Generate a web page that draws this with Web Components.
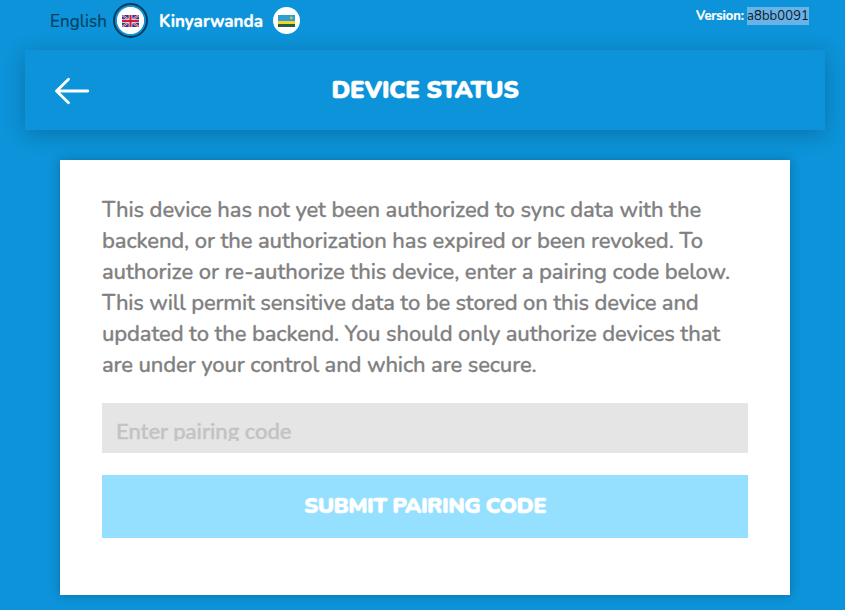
<!DOCTYPE html>
<html lang="en">
<head>
<meta charset="utf-8">
<title>Device status</title>
<style>
  html, body { margin: 0; height: 100%; overflow: hidden; background: #0c93d9; }
  body { font-family: Nunito, Lato, "Open Sans", sans-serif; color: #fff; }
</style>
</head>
<body>
<device-app></device-app>
<script>
const define = (name, html, ready) => customElements.define(name, class extends HTMLElement {
  connectedCallback() {
    if (this.shadowRoot) return;
    const t = document.createElement('template');
    t.innerHTML = html;
    this.attachShadow({ mode: 'open' }).append(t.content.cloneNode(true));
    if (ready) ready(this);
  }
});

/* One line of text, tracked so that it spans the given measure. */
define('text-line', `
  <style>:host{display:block;white-space:nowrap} span{display:inline-block}</style>
  <span></span>`, el => {
  const s = el.shadowRoot.querySelector('span');
  s.textContent = el.getAttribute('text');
  const target = +el.getAttribute('measure');
  const gap = (target - s.getBoundingClientRect().width) / s.textContent.length;
  s.style.letterSpacing = gap.toFixed(3) + 'px';
});

define('flag-badge', `
  <style>
    :host{display:grid;place-items:center;box-sizing:border-box;width:27px;height:27px;border-radius:50%;background:#fff}
    :host([selected]){width:35px;height:35px;border:2px solid #063c59;background:radial-gradient(circle,#fff 13.2px,#0c93d9 14px)}
  </style><slot></slot>`);

define('language-bar', `
  <style>
    :host{display:flex;align-items:center;height:41px;font-size:17px;line-height:22px}
    .en{color:#07405f;margin:2px 6px 0 0;-webkit-text-stroke:.2px}
    .rw{font-weight:700;margin:2px 10px 0 11px;-webkit-text-stroke:.3px}
    svg{display:block}
  </style>
  <text-line class="en" text="English" measure="57"></text-line>
  <flag-badge selected>
    <svg width="17" height="12" viewBox="0 0 17 12">
      <rect width="17" height="12" fill="#293f91"/>
      <path d="M0 0L17 12M17 0L0 12" stroke="#d9cfe0" stroke-width="2"/>
      <path d="M0 0L17 12M17 0L0 12" stroke="#d2384f" stroke-width="1"/>
      <path d="M8.5 0V12M0 6H17" stroke="#f4eef4" stroke-width="3.6"/>
      <path d="M8.5 0V12M0 6H17" stroke="#d01e3a" stroke-width="2.1"/>
    </svg>
  </flag-badge>
  <text-line class="rw" text="Kinyarwanda" measure="104"></text-line>
  <flag-badge>
    <svg width="17" height="12" viewBox="0 0 17 12">
      <rect width="17" height="6" fill="#2d9fd4"/><rect y="6" width="17" height="3" fill="#f5d32c"/>
      <rect y="9" width="17" height="3" fill="#22603f"/><circle cx="13.3" cy="2.9" r="1.4" fill="#c8c450"/>
    </svg>
  </flag-badge>`);

define('version-label', `
  <style>
    :host{display:flex;font-size:13px;line-height:18px;margin-top:7px}
    .k{font-weight:700;margin-right:3px;-webkit-text-stroke:.2px}
    .v{background:#69b3e9;color:#10191f;width:62px}
  </style>
  <text-line class="k" text="Version:" measure="48"></text-line>
  <text-line class="v" text="a8bb0091" measure="62"></text-line>`);

define('page-header', `
  <style>
    :host{display:grid;grid-template-columns:1fr auto 1fr;align-items:center;box-sizing:border-box;height:80px;margin:0 20px 0 25px;padding:0 29px;
      background:#0c93d9;box-shadow:0 4px 20px rgba(0,0,0,.22);font-size:24px;font-weight:900;line-height:30px}
    svg{display:block;margin-top:2px}
    text-line{-webkit-text-stroke:.4px}
  </style>
  <svg width="36" height="28" viewBox="0 0 36 28" fill="none" stroke="#fff" stroke-width="2.8" stroke-linecap="round" stroke-linejoin="round">
    <path d="M14.5 2.3L2.5 14L14.5 25.7M2.5 14H33.8"/>
  </svg>
  <text-line text="DEVICE STATUS" measure="187"></text-line>`);

define('pairing-field', `
  <style>
    :host{display:block;box-sizing:border-box;height:50px;padding:14px 14px 0;background:#e5e5e5;color:#c3c3c3;
      font:500 22px/28px Lato,sans-serif;-webkit-text-stroke:.4px}
    div{height:24px;overflow:hidden}
  </style>
  <div><text-line text="Enter pairing code" measure="175.5"></text-line></div>`);

define('submit-button', `
  <style>
    :host{display:grid;place-items:center;box-sizing:border-box;height:63px;margin-top:22px;padding-bottom:2px;background:#95e0ff;font-size:22px;font-weight:900;line-height:28px;-webkit-text-stroke:.3px}
  </style>
  <text-line text="SUBMIT PAIRING CODE" measure="242"></text-line>`);

define('status-card', `
  <style>
    :host{display:block;box-sizing:border-box;height:435px;margin:30px 55px 0 60px;padding:35px 42px;background:#fff;
      box-shadow:0 0 10px rgba(0,0,0,.24)}
    .copy{color:#808080;font-size:22px;font-weight:500;line-height:31px;margin-bottom:22px;-webkit-text-stroke:.3px}
  </style>
  <div class="copy">
    <text-line text="This device has not yet been authorized to sync data with the" measure="599"></text-line>
    <text-line text="backend, or the authorization has expired or been revoked. To" measure="601"></text-line>
    <text-line text="authorize or re-authorize this device, enter a pairing code below." measure="628"></text-line>
    <text-line text="This will permit sensitive data to be stored on this device and" measure="596.5"></text-line>
    <text-line text="updated to the backend. You should only authorize devices that" measure="618"></text-line>
    <text-line text="are under your control and which are secure." measure="434.5"></text-line>
  </div>
  <pairing-field></pairing-field>
  <submit-button></submit-button>`);

define('device-app', `
  <style>
    :host{display:block;height:610px}
    .top{display:flex;justify-content:space-between;align-items:flex-start;height:50px;padding:0 36px 0 50px}
  </style>
  <div class="top"><language-bar></language-bar><version-label></version-label></div>
  <page-header></page-header>
  <status-card></status-card>`);
</script>
</body>
</html>
